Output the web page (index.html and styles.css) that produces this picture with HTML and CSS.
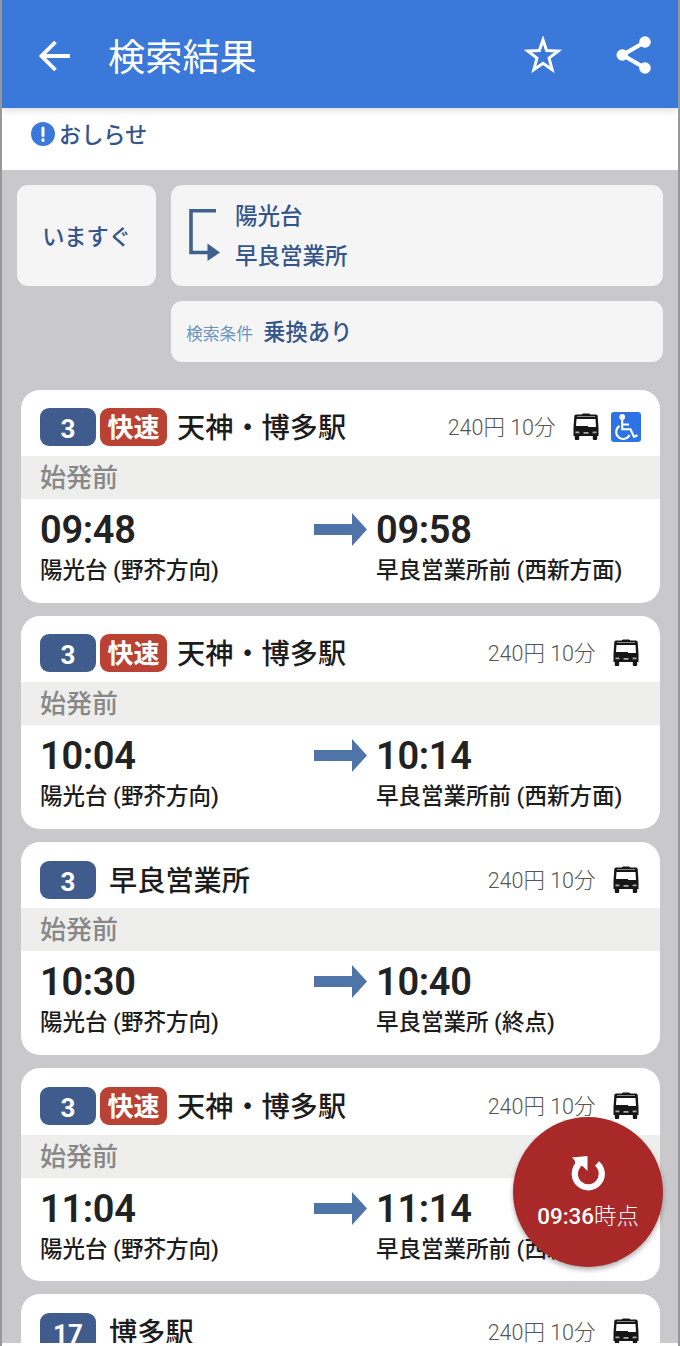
FILE: index.html
```html
<!DOCTYPE html>
<html lang="ja">
<head>
    <meta charset="UTF-8">
    <meta name="viewport" content="width=device-width, initial-scale=1">
    <title>検索結果</title>
    <link rel="stylesheet" href="styles.css">
</head>
<body>
    <!-- shared icons -->
    <svg class="icon-defs" xmlns="http://www.w3.org/2000/svg">
        <symbol id="bus" viewBox="0 0 26 28">
            <path fill="#161616" d="M8.500 1.500L10 .5h6l1.500 1H23q1.500 0 1.700 1.500L25.500 15v8h-1.300V26q0 1-1 1h-2.400q-1 0-1-1v-3H6.200V26q0 1-1 1H2.800q-1 0-1-1v-3H.5V15L1.300 3Q1.500 1.500 3 1.500z"/>
            <path fill="#fff" d="M4 3.500h18v.6H4zM3.500 6h19l.5 8H15.500l-.8-1H3z"/>
            <path fill="#aaa" d="M2.500 18.500h3.600l.6 1.800H2.500zM19.900 18.500h3.600v1.800h-4.200zM10.500 19h5v1.800h-5z"/>
        </symbol>
        <symbol id="arrow" viewBox="0 0 53 33">
            <path fill="#4e74a8" d="M0 11h38V0l15 16.500L38 33V22H0z"/>
        </symbol>
    </svg>

    <div class="screen">
        <header class="app-bar">
            <svg class="back" viewBox="0 0 32 32"><path d="M31 16H3M16.500 2L2.500 16l14 14" fill="none" stroke="#fff" stroke-width="3.800"/></svg>
            <h1>検索結果</h1>
            <svg class="star" viewBox="0 0 36 36"><path d="M18 3.600l3.400 10.200 11 .5-8.700 6.600 3 11-8.700-6-8.700 6 3-11-8.700-6.600 11-.5z" fill="none" stroke="#fff" stroke-width="2.800"/></svg>
            <svg class="share" viewBox="0 0 36 38"><path d="M29 6L6.500 19 29 32" fill="none" stroke="#fff" stroke-width="4.200"/><circle cx="29" cy="6" r="5.800" fill="#fff"/><circle cx="6.300" cy="19" r="5.800" fill="#fff"/><circle cx="29" cy="32" r="5.800" fill="#fff"/></svg>
        </header>

        <div class="notice">
            <svg viewBox="0 0 24 24"><circle cx="12" cy="12" r="12" fill="#3a78d9"/><path d="M12 6v7.500M12 17.500v1" stroke="#fff" stroke-width="3" stroke-linecap="round"/></svg>
            <span>おしらせ</span>
        </div>

        <main class="content">
            <div class="search">
                <div class="box when">いますぐ</div>
                <div class="box route">
                    <svg viewBox="0 0 31 52"><path d="M27 1.700H2V43.500h18" fill="none" stroke="#40608f" stroke-width="3.600"/><path d="M18.500 34.500L31 43.500 18.500 52z" fill="#40608f"/></svg>
                    <div>
                        <div>陽光台</div>
                        <div>早良営業所</div>
                    </div>
                </div>
                <div class="box option"><small>検索条件</small><span>乗換あり</span></div>
            </div>

            <div class="list">
                <div class="card">
                    <div class="card-head">
                        <span class="number">3</span><span class="rapid">快速</span>
                        <span class="dest">天神・博多駅</span>
                        <span class="fare">240円 10分</span>
                        <svg class="bus"><use href="#bus"/></svg>
                        <svg class="wheelchair" viewBox="0 0 30 30">
                            <rect width="30" height="30" rx="3" fill="#2d73e3"/>
                            <circle cx="11.200" cy="5" r="2.900" fill="#fff"/>
                            <path d="M11.200 7v10.300h8.300l3.500 7.500 3.500-1.500M11.500 12.500h6.500M8.500 14a7 7 0 1 0 10 9" fill="none" stroke="#fff" stroke-width="2.100"/>
                        </svg>
                    </div>
                    <div class="status">始発前</div>
                    <div class="times">
                        <div class="stop"><b>09:48</b><span>陽光台 (野芥方向)</span></div>
                        <svg class="arrow"><use href="#arrow"/></svg>
                        <div class="stop"><b>09:58</b><span>早良営業所前 (西新方面)</span></div>
                    </div>
                </div>

                <div class="card">
                    <div class="card-head">
                        <span class="number">3</span><span class="rapid">快速</span>
                        <span class="dest">天神・博多駅</span>
                        <span class="fare">240円 10分</span>
                        <svg class="bus"><use href="#bus"/></svg>
                    </div>
                    <div class="status">始発前</div>
                    <div class="times">
                        <div class="stop"><b>10:04</b><span>陽光台 (野芥方向)</span></div>
                        <svg class="arrow"><use href="#arrow"/></svg>
                        <div class="stop"><b>10:14</b><span>早良営業所前 (西新方面)</span></div>
                    </div>
                </div>

                <div class="card">
                    <div class="card-head">
                        <span class="number">3</span>
                        <span class="dest local">早良営業所</span>
                        <span class="fare">240円 10分</span>
                        <svg class="bus"><use href="#bus"/></svg>
                    </div>
                    <div class="status">始発前</div>
                    <div class="times">
                        <div class="stop"><b>10:30</b><span>陽光台 (野芥方向)</span></div>
                        <svg class="arrow"><use href="#arrow"/></svg>
                        <div class="stop"><b>10:40</b><span>早良営業所 (終点)</span></div>
                    </div>
                </div>

                <div class="card">
                    <div class="card-head">
                        <span class="number">3</span><span class="rapid">快速</span>
                        <span class="dest">天神・博多駅</span>
                        <span class="fare">240円 10分</span>
                        <svg class="bus"><use href="#bus"/></svg>
                    </div>
                    <div class="status">始発前</div>
                    <div class="times">
                        <div class="stop"><b>11:04</b><span>陽光台 (野芥方向)</span></div>
                        <svg class="arrow"><use href="#arrow"/></svg>
                        <div class="stop"><b>11:14</b><span>早良営業所前 (西新方面)</span></div>
                    </div>
                </div>

                <div class="card">
                    <div class="card-head">
                        <span class="number">17</span>
                        <span class="dest local">博多駅</span>
                        <span class="fare">240円 10分</span>
                        <svg class="bus"><use href="#bus"/></svg>
                    </div>
                </div>
            </div>
        </main>

        <button class="refresh">
            <svg viewBox="0 0 34 36"><path d="M26 8.500A13.500 13.500 0 1 1 7.500 9.500" fill="none" stroke="#fff" stroke-width="6.200"/><path d="M1 2.500L16.500 1V16L11.500 11 4 12V6z" fill="#fff"/></svg>
            <span>09:36<i>時点</i></span>
        </button>
    </div>
</body>
</html>
```

FILE: styles.css
```css
* {
    margin: 0;
    padding: 0;
    box-sizing: border-box;
}

body {
    font-family: Roboto, "Noto Sans CJK JP", sans-serif;
    background: #fff;
    color: #1c1c1c;
}

svg {
    display: block;
    flex: none;
}

.icon-defs {
    width: 0;
    height: 0;
    position: absolute;
}

.screen {
    position: relative;
    display: flex;
    flex-direction: column;
    height: 1346px;
    padding-bottom: 3px;
    border-left: 2px solid #989898;
    border-right: 2px solid #989898;
    overflow: hidden;
}

/* top bar */
.app-bar {
    display: flex;
    align-items: center;
    flex: none;
    height: 108px;
    padding: 3px 26px 0 37px;
    background: #3a78d9;
    box-shadow: 0 1px 8px rgba(0, 0, 0, 0.2);
    z-index: 1;
}
.app-bar h1 {
    flex: 1;
    margin-left: 37px;
    padding-top: 4px;
    color: #fff;
    font-size: 37.200px;
    font-weight: 400;
    line-height: 50px;
}
.back { width: 32px; height: 32px; }
.star { width: 38px; height: 38px; margin: 0 54px 2px 0; }
.share { width: 36px; height: 38px; margin-bottom: 1px; }

.notice {
    display: flex;
    align-items: center;
    flex: none;
    height: 62px;
    padding: 0 29px 10px;
    gap: 4px;
    background: #fff;
    color: #34558c;
    font-size: 22.200px;
    font-weight: 500;
}
.notice svg { width: 24px; height: 24px; }
.notice span { padding-bottom: 3px; }

.content {
    flex: 1;
    min-height: 0;
    overflow: hidden;
    background: #c9c9cc;
}

/* search conditions */
.search {
    display: grid;
    grid-template-columns: 139px 1fr;
    grid-template-rows: 101px 61px;
    gap: 15px;
    padding: 15px 15px 0;
    color: #34558c;
    font-size: 22.500px;
    font-weight: 500;
}
.box {
    display: flex;
    align-items: center;
    background: #f5f5f5;
    border-radius: 11px;
}
.when {
    justify-content: center;
    padding-bottom: 2px;
    font-size: 22.200px;
}
.route {
    padding-left: 18px;
    gap: 15px;
    line-height: 40px;
}
.route svg { width: 31px; height: 52px; margin-top: -2px; }
.option {
    grid-column: 2;
    padding: 0 0 3px 15px;
    gap: 10px;
    font-size: 22.300px;
}
.option small {
    padding-top: 6px;
    color: #6c94bd;
    font-size: 16.800px;
    font-weight: 400;
}

/* results */
.list {
    display: flex;
    flex-direction: column;
    gap: 13px;
    padding: 27.500px 18.500px 0 19px;
}
.card {
    flex: none;
    height: 213.200px;
    background: #fff;
    border-radius: 19px;
    overflow: hidden;
}
.card-head {
    display: flex;
    align-items: center;
    height: 66.500px;
    padding: 9px 19px 0;
}
.number, .rapid {
    height: 38px;
    border-radius: 9px;
    color: #fff;
    text-align: center;
    line-height: 40px;
}
.number {
    width: 56px;
    background: #405c8c;
    font-size: 26px;
    font-weight: 700;
    line-height: 42px;
}
.rapid {
    width: 67px;
    margin-left: 4px;
    background: #b94234;
    font-size: 26px;
    font-weight: 700;
}
.dest {
    flex: 1;
    margin-left: 10px;
    padding-top: 4px;
    font-size: 28.200px;
    font-weight: 500;
    line-height: 38px;
}
.dest.local { margin-left: 13px; }
.fare {
    padding-bottom: 3px;
    color: #555;
    font-size: 21.500px;
    font-weight: 300;
}
.bus {
    width: 26px;
    height: 28px;
    margin: 0 2px 0 17px;
}
.wheelchair {
    width: 30px;
    height: 30px;
    margin-left: 10px;
}

.status {
    height: 43px;
    padding: 1px 0 0 19px;
    background: #eeeeed;
    color: #888;
    font-size: 26px;
    font-weight: 500;
    line-height: 43px;
}
.times {
    display: grid;
    grid-template-columns: 273px 53px 1fr;
    padding: 10px 0 0 19px;
}
.stop { white-space: nowrap; }
.stop b {
    display: block;
    color: #222;
    font-size: 38px;
    font-weight: 600;
    letter-spacing: -0.300px;
    line-height: 43px;
}
.stop span {
    display: block;
    font-size: 22.500px;
    font-weight: 500;
    line-height: 36px;
}
.arrow {
    width: 53px;
    height: 33px;
    margin: 4px 0 0 1px;
}
.arrow + .stop { padding-left: 10px; }

/* floating reload button */
.refresh {
    position: absolute;
    right: 15px;
    bottom: 79px;
    display: flex;
    flex-direction: column;
    align-items: center;
    width: 150px;
    height: 150px;
    padding-top: 38px;
    border: none;
    border-radius: 50%;
    background: #a92929;
    box-shadow: 0 3px 5px rgba(0, 0, 0, 0.3);
    color: #fff;
    font-family: inherit;
    font-size: 22.400px;
    font-weight: 500;
    z-index: 2;
}
.refresh svg { width: 34px; height: 36px; }
.refresh span { line-height: 50px; }
.refresh i {
    font-style: normal;
    font-weight: 300;
}
```
